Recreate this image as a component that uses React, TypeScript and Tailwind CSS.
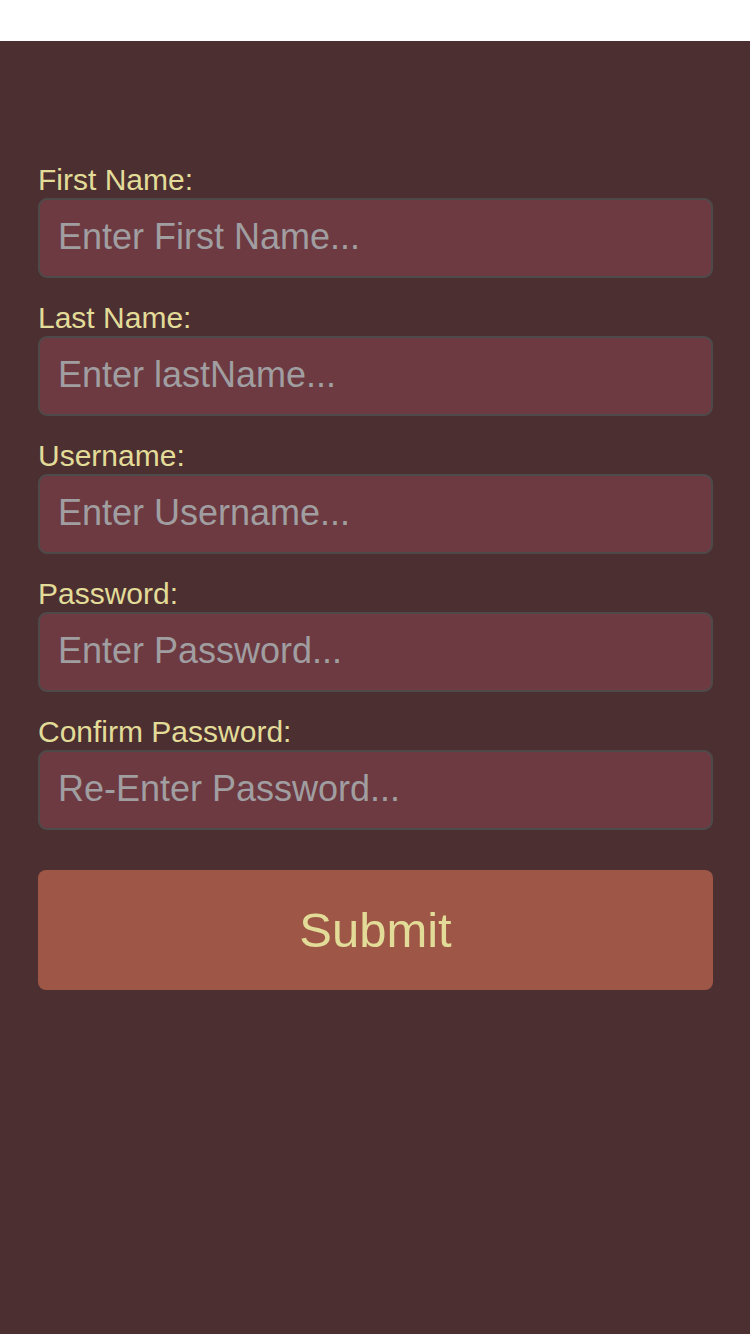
import { useState } from "react";

const fields = [
  { label: "First Name:", placeholder: "Enter First Name...", type: "text" },
  { label: "Last Name:", placeholder: "Enter lastName...", type: "text" },
  { label: "Username:", placeholder: "Enter Username...", type: "text" },
  { label: "Password:", placeholder: "Enter Password...", type: "password" },
  { label: "Confirm Password:", placeholder: "Re-Enter Password...", type: "password" },
];

export default function App() {
  const [values, setValues] = useState<string[]>(fields.map(() => ""));

  return (
    <div className="min-h-screen flex flex-col bg-white font-['Liberation_Sans',Arial,sans-serif]">
      <div className="h-[41px] bg-white" />
      <div className="flex-1 bg-[#4b2f31] pt-[122px] pl-[37px] pr-[37px]">
        <form className="flex flex-col gap-[23px]" onSubmit={(e) => e.preventDefault()}>
          {fields.map((f, i) => (
            <div key={f.label} className="flex flex-col">
              <label className="ml-px text-[30px] leading-[34px] text-[#e3dc98] mb-[1px]">{f.label}</label>
              <input
                type={f.type}
                value={values[i]}
                placeholder={f.placeholder}
                onChange={(e) => {
                  const next = [...values];
                  next[i] = e.target.value;
                  setValues(next);
                }}
                className="ml-px h-[80px] w-[675px] rounded-[9px] border-2 border-[#4f4a4a] bg-[#6d3a42] pl-[18px] pb-[3px] text-[36px] text-[#e3dc98] placeholder:text-[#a09ea0] outline-none"
              />
            </div>
          ))}
          <button
            type="submit"
            className="ml-px mt-[17px] h-[120px] w-[675px] rounded-[8px] bg-[#9e5646] pt-[2px] text-[49px] text-[#e3dc98]"
          >
            Submit
          </button>
        </form>
      </div>
    </div>
  );
}
